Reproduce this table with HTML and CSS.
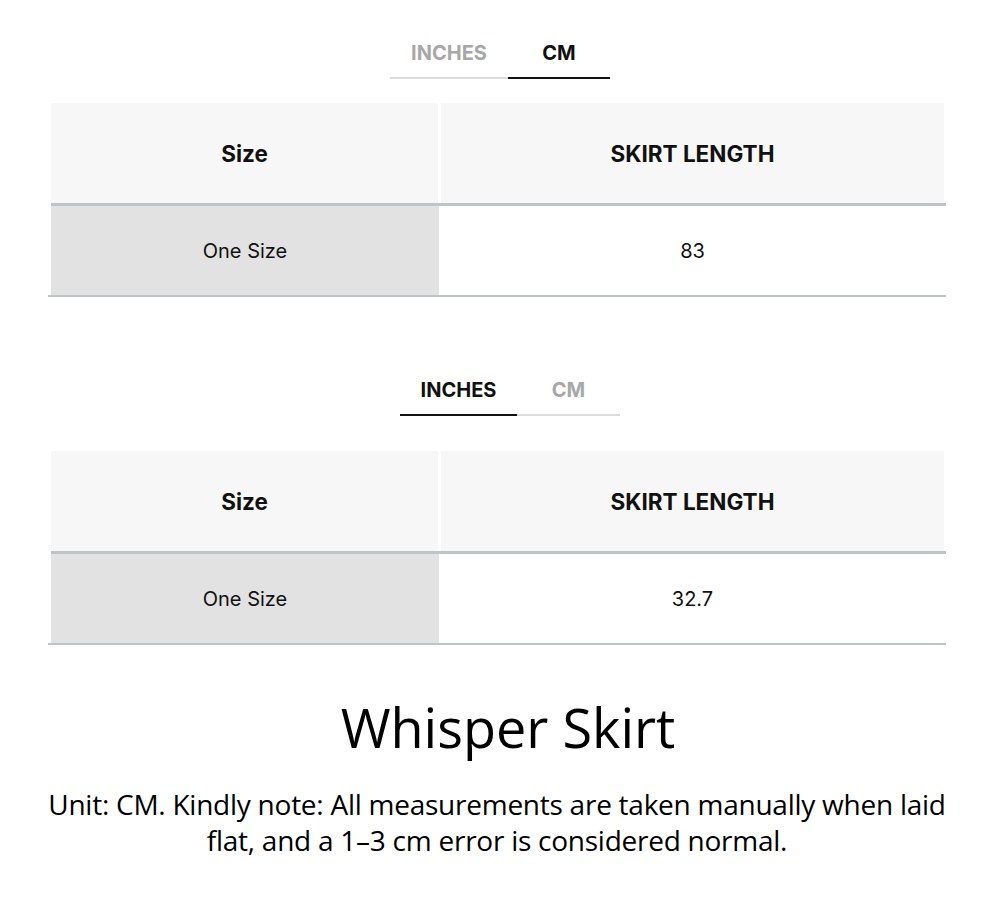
FILE: index.html
```html
<!DOCTYPE html>
<html>
<head>
<meta charset="utf-8">
<link rel="stylesheet" href="styles.css">
</head>
<body>
<div class="page">
  <div class="tabs tabs-first">
    <div class="tab tab-in">INCHES</div>
    <div class="tab tab-cm active">CM</div>
  </div>
  <div class="chart chart-first">
    <div class="row head">
      <div class="cell c1">Size</div>
      <div class="cell c2">SKIRT LENGTH</div>
    </div>
    <div class="row body">
      <div class="cell c1">One Size</div>
      <div class="cell c2">83</div>
    </div>
  </div>

  <div class="tabs tabs-second">
    <div class="tab tab-in active">INCHES</div>
    <div class="tab tab-cm">CM</div>
  </div>
  <div class="chart chart-second">
    <div class="row head">
      <div class="cell c1">Size</div>
      <div class="cell c2">SKIRT LENGTH</div>
    </div>
    <div class="row body">
      <div class="cell c1">One Size</div>
      <div class="cell c2">32.7</div>
    </div>
  </div>

  <h1 class="title">Whisper Skirt</h1>
  <p class="note">Unit: CM. Kindly note: All measurements are taken manually when laid flat, and a 1–3 cm error is considered normal.</p>
</div>
</body>
</html>
```

FILE: styles.css
```css
* { box-sizing: border-box; }
html, body { margin: 0; padding: 0; background: #fff; }
body { font-family: Inter, "Noto Sans", sans-serif; color: #111; }

.page {
  width: 1000px;
  padding: 28px 0 0 0;
}

.tabs {
  display: flex;
  justify-content: center;
}
.tabs-second { padding-left: 20px; margin-top: 68px; }

.tab {
  font-family: Inter, sans-serif;
  font-weight: 700;
  font-size: 20px;
  line-height: 24px;
  color: #a7a7a7;
  text-align: center;
  padding: 13px 0 12px;
  border-bottom: 2px solid #dcdcdc;
}
.tab.active { color: #111; border-bottom-color: #111; }
.tab-in { width: 118px; }
.tab-cm { width: 102px; }
.tabs-second .tab-in { width: 117px; }
.tabs-second .tab-cm { width: 103px; }

.chart {
  margin-left: 48px;
  width: 898px;
}
.chart-first { margin-top: 24px; }
.chart-second { margin-top: 35px; }

.row { display: flex; }
.head {
  margin: 0 0 0 3px;
  border-bottom: 3px solid #bec5c9;
  padding-right: 2px;
}
.head .cell {
  height: 100px;
  background: #f7f7f7;
  font-weight: 700;
  font-size: 22.5px;
}
.head .c1 { width: 387px; }
.head .c2 { flex: 1; margin-left: 3px; }

.body { border-bottom: 2px solid #bec5c9; padding-left: 3px; }
.body .cell {
  height: 89px;
  font-size: 20px;
  font-weight: 400;
}
.body .c1 { width: 388px; background: #e2e2e2; }
.body .c2 { flex: 1; background: #fff; }

.cell {
  display: flex;
  align-items: center;
  justify-content: center;
}

.title {
  font-family: "Open Sans", sans-serif;
  font-weight: 400;
  font-size: 54px;
  line-height: 64px;
  text-align: center;
  margin: 50px 0 0;
  padding-left: 16px;
  color: #000;
}
.note {
  font-family: "Open Sans", sans-serif;
  font-size: 28px;
  line-height: 36px;
  letter-spacing: -0.25px;
  text-align: center;
  margin: 27px 40px 0 34px;
  color: #000;
}
```
